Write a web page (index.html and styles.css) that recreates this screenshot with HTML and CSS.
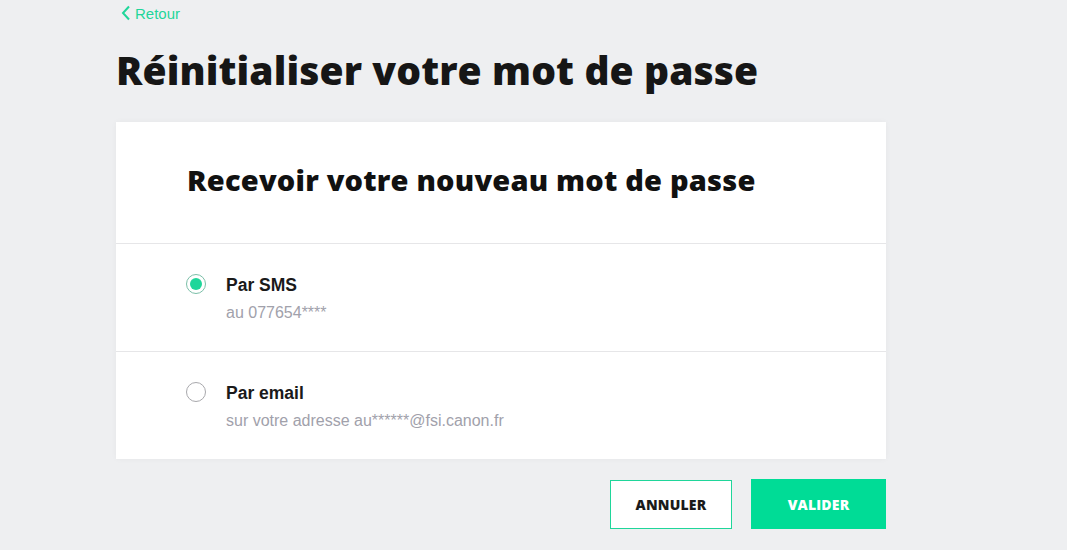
FILE: index.html
```html
<!DOCTYPE html>
<html lang="fr">
<head>
<meta charset="UTF-8">
<meta name="viewport" content="width=device-width, initial-scale=1.0">
<title>Réinitialiser votre mot de passe</title>
<link rel="stylesheet" href="styles.css">
</head>
<body>
  <div class="page">
    <a class="back" href="#">
      <svg width="10" height="16" viewBox="0 0 10 16"><path d="M8 1.5 L2 8 L8 14.5" fill="none" stroke="#1fd69a" stroke-width="2"/></svg>
      Retour
    </a>

    <h1>Réinitialiser votre mot de passe</h1>

    <div class="card">
      <div class="card-head">
        <h2>Recevoir votre nouveau mot de passe</h2>
      </div>

      <label class="option">
        <input type="radio" name="method" checked>
        <span class="radio"></span>
        <span class="option-text">
          <span class="option-title">Par SMS</span>
          <span class="option-sub">au 077654****</span>
        </span>
      </label>

      <label class="option">
        <input type="radio" name="method">
        <span class="radio"></span>
        <span class="option-text">
          <span class="option-title">Par email</span>
          <span class="option-sub">sur votre adresse au******@fsi.canon.fr</span>
        </span>
      </label>
    </div>

    <div class="actions">
      <button type="button" class="btn btn-cancel">ANNULER</button>
      <button type="button" class="btn btn-ok">VALIDER</button>
    </div>
  </div>
</body>
</html>
```

FILE: styles.css
```css
body {
  margin: 0;
  padding: 0;
  background-color: #eeeff1;
  font-family: "Liberation Sans", Arial, sans-serif;
  color: #141414;
}

.page {
  width: 770px;
  margin-left: 116px;
}

.back {
  display: flex;
  align-items: center;
  gap: 4px;
  height: 26px;
  padding-left: 5px;
  color: #1fd69a;
  font-size: 15px;
  text-decoration: none;
}

h1 {
  margin: 19px 0 0;
  font-family: "Open Sans", sans-serif;
  font-weight: 800;
  font-size: 39px;
  line-height: 50px;
  letter-spacing: 0.1px;
  color: #161616;
}

.card {
  margin-top: 27px;
  background-color: #fff;
  box-shadow: 0 0 6px rgba(0, 0, 0, 0.04);
}

.card-head {
  height: 121px;
  box-sizing: border-box;
  display: flex;
  align-items: center;
  padding: 0 0 6px 71px;
  border-bottom: 1px solid #e6e6e8;
}

.card-head {
  height: 122px;
}

h2 {
  margin: 0;
  font-family: "Open Sans", sans-serif;
  font-weight: 800;
  font-size: 29px;
  letter-spacing: 0.2px;
  color: #111;
}

.option {
  height: 107px;
  display: flex;
  align-items: center;
  padding-left: 70px;
  cursor: pointer;
}

.option + .option {
  border-top: 1px solid #e6e6e8;
}

.option input {
  display: none;
}

.radio {
  width: 18px;
  height: 18px;
  border: 1px solid #a8a8ac;
  border-radius: 50%;
  margin-top: -28px;
  margin-right: 20px;
  display: flex;
  align-items: center;
  justify-content: center;
}

.option input:checked + .radio {
  border-color: #7bbfa8;
}

.option input:checked + .radio::after {
  content: "";
  width: 12px;
  height: 12px;
  border-radius: 50%;
  background-color: #1fd69a;
}

.option-text {
  display: flex;
  flex-direction: column;
  gap: 8px;
  margin-top: 2px;
}

.option-title {
  font-weight: bold;
  font-size: 17.5px;
  color: #1a1a1a;
}

.option-sub {
  font-size: 16px;
  color: #a1a1ab;
}

.actions {
  display: flex;
  justify-content: flex-end;
  align-items: center;
  gap: 19px;
  margin-top: 20px;
}

.btn {
  font-family: "Open Sans", sans-serif;
  font-weight: 800;
  font-size: 14px;
  letter-spacing: 0.2px;
  cursor: pointer;
  border-radius: 0;
}

.btn-cancel {
  width: 122px;
  height: 49px;
  background-color: #fff;
  border: 1px solid #1fd69a;
  color: #1a1a1a;
}

.btn-ok {
  width: 135px;
  height: 50px;
  background-color: #00dc96;
  border: none;
  color: #fff;
}
```
